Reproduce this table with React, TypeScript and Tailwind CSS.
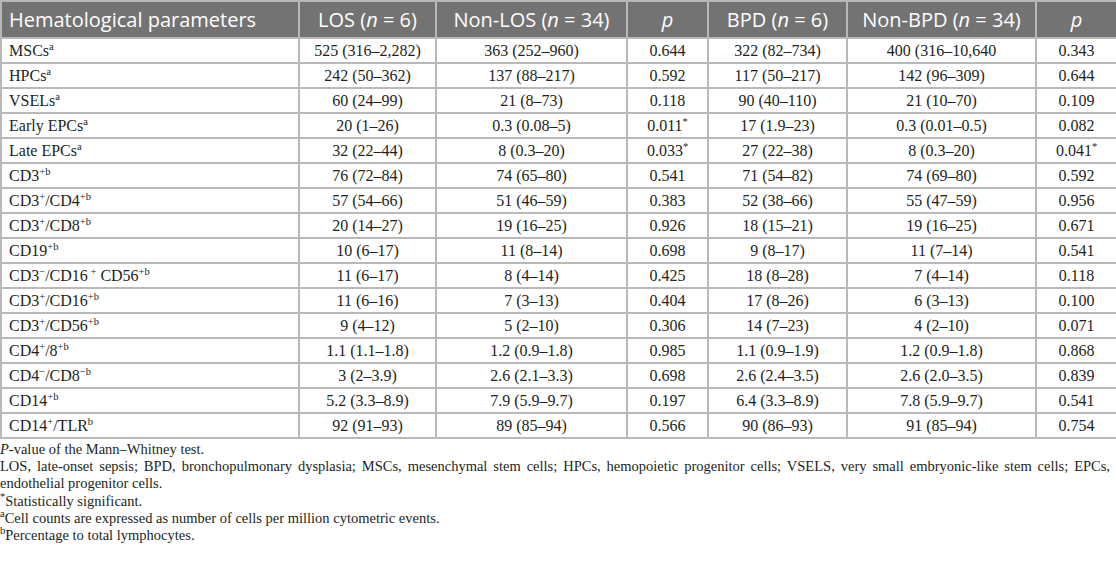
import type { ReactNode } from "react";

type Row = {
  label: ReactNode;
  los: string;
  nonLos: string;
  p1: ReactNode;
  bpd: string;
  nonBpd: string;
  p2: ReactNode;
};

const Sup = ({ children }: { children: ReactNode }) => (
  <sup className="text-[10.5px] leading-none relative -top-[6px] align-baseline">{children}</sup>
);

const Sig = ({ v }: { v: string }) => (
  <>
    {v}
    <Sup>*</Sup>
  </>
);

const rows: Row[] = [
  { label: <>MSCs<Sup>a</Sup></>, los: "525 (316–2,282)", nonLos: "363 (252–960)", p1: "0.644", bpd: "322 (82–734)", nonBpd: "400 (316–10,640", p2: "0.343" },
  { label: <>HPCs<Sup>a</Sup></>, los: "242 (50–362)", nonLos: "137 (88–217)", p1: "0.592", bpd: "117 (50–217)", nonBpd: "142 (96–309)", p2: "0.644" },
  { label: <>VSELs<Sup>a</Sup></>, los: "60 (24–99)", nonLos: "21 (8–73)", p1: "0.118", bpd: "90 (40–110)", nonBpd: "21 (10–70)", p2: "0.109" },
  { label: <>Early EPCs<Sup>a</Sup></>, los: "20 (1–26)", nonLos: "0.3 (0.08–5)", p1: <Sig v="0.011" />, bpd: "17 (1.9–23)", nonBpd: "0.3 (0.01–0.5)", p2: "0.082" },
  { label: <>Late EPCs<Sup>a</Sup></>, los: "32 (22–44)", nonLos: "8 (0.3–20)", p1: <Sig v="0.033" />, bpd: "27 (22–38)", nonBpd: "8 (0.3–20)", p2: <Sig v="0.041" /> },
  { label: <>CD3<Sup>+b</Sup></>, los: "76 (72–84)", nonLos: "74 (65–80)", p1: "0.541", bpd: "71 (54–82)", nonBpd: "74 (69–80)", p2: "0.592" },
  { label: <>CD3<Sup>+</Sup>/CD4<Sup>+b</Sup></>, los: "57 (54–66)", nonLos: "51 (46–59)", p1: "0.383", bpd: "52 (38–66)", nonBpd: "55 (47–59)", p2: "0.956" },
  { label: <>CD3<Sup>+</Sup>/CD8<Sup>+b</Sup></>, los: "20 (14–27)", nonLos: "19 (16–25)", p1: "0.926", bpd: "18 (15–21)", nonBpd: "19 (16–25)", p2: "0.671" },
  { label: <>CD19<Sup>+b</Sup></>, los: "10 (6–17)", nonLos: "11 (8–14)", p1: "0.698", bpd: "9 (8–17)", nonBpd: "11 (7–14)", p2: "0.541" },
  { label: <>CD3<Sup>−</Sup>/CD16<Sup> +</Sup> CD56<Sup>+b</Sup></>, los: "11 (6–17)", nonLos: "8 (4–14)", p1: "0.425", bpd: "18 (8–28)", nonBpd: "7 (4–14)", p2: "0.118" },
  { label: <>CD3<Sup>+</Sup>/CD16<Sup>+b</Sup></>, los: "11 (6–16)", nonLos: "7 (3–13)", p1: "0.404", bpd: "17 (8–26)", nonBpd: "6 (3–13)", p2: "0.100" },
  { label: <>CD3<Sup>+</Sup>/CD56<Sup>+b</Sup></>, los: "9 (4–12)", nonLos: "5 (2–10)", p1: "0.306", bpd: "14 (7–23)", nonBpd: "4 (2–10)", p2: "0.071" },
  { label: <>CD4<Sup>+</Sup>/8<Sup>+b</Sup></>, los: "1.1 (1.1–1.8)", nonLos: "1.2 (0.9–1.8)", p1: "0.985", bpd: "1.1 (0.9–1.9)", nonBpd: "1.2 (0.9–1.8)", p2: "0.868" },
  { label: <>CD4<Sup>−</Sup>/CD8<Sup>−b</Sup></>, los: "3 (2–3.9)", nonLos: "2.6 (2.1–3.3)", p1: "0.698", bpd: "2.6 (2.4–3.5)", nonBpd: "2.6 (2.0–3.5)", p2: "0.839" },
  { label: <>CD14<Sup>+b</Sup></>, los: "5.2 (3.3–8.9)", nonLos: "7.9 (5.9–9.7)", p1: "0.197", bpd: "6.4 (3.3–8.9)", nonBpd: "7.8 (5.9–9.7)", p2: "0.541" },
  { label: <>CD14<Sup>+</Sup>/TLR<Sup>b</Sup></>, los: "92 (91–93)", nonLos: "89 (85–94)", p1: "0.566", bpd: "90 (86–93)", nonBpd: "91 (85–94)", p2: "0.754" },
];

const th = "border-2 border-[#b9b9b9] font-normal text-center h-[37px] p-0";
const td = "border-2 border-[#b9b9b9] text-center h-[25px] p-0 leading-none";

export default function App() {
  return (
    <div className="w-[1116px] h-[566px] bg-white font-['Liberation_Serif',serif] text-[#231f20] overflow-hidden">
      <table className="w-[1116px] table-fixed border-collapse">
        <colgroup>
          <col className="w-[298px]" />
          <col className="w-[137px]" />
          <col className="w-[191px]" />
          <col className="w-[81px]" />
          <col className="w-[139px]" />
          <col className="w-[189px]" />
          <col className="w-[81px]" />
        </colgroup>
        <thead>
          <tr className="bg-[#737373] text-white text-[20px] font-['Open_Sans',sans-serif]">
            <th className={`${th} text-left pl-[7px]`}>Hematological parameters</th>
            <th className={th}>
              LOS (<i>n</i> = 6)
            </th>
            <th className={th}>
              Non-LOS (<i>n</i> = 34)
            </th>
            <th className={th}>
              <i>p</i>
            </th>
            <th className={th}>
              BPD (<i>n</i> = 6)
            </th>
            <th className={th}>
              Non-BPD (<i>n</i> = 34)
            </th>
            <th className={th}>
              <i>p</i>
            </th>
          </tr>
        </thead>
        <tbody className="text-[16px]">
          {rows.map((r, i) => (
            <tr key={i}>
              <td className={`${td} text-left pl-[7px]`}>{r.label}</td>
              <td className={td}>{r.los}</td>
              <td className={td}>{r.nonLos}</td>
              <td className={td}>{r.p1}</td>
              <td className={td}>{r.bpd}</td>
              <td className={td}>{r.nonBpd}</td>
              <td className={td}>{r.p2}</td>
            </tr>
          ))}
        </tbody>
      </table>
      <div className="mt-[2px] text-[14.5px] leading-[17.2px] pr-[6px]">
        <p>
          <i>P</i>-value of the Mann–Whitney test.
        </p>
        <p className="text-justify">
          LOS, late-onset sepsis; BPD, bronchopulmonary dysplasia; MSCs, mesenchymal stem cells; HPCs, hemopoietic
          progenitor cells; VSELS, very small embryonic-like stem cells; EPCs, endothelial progenitor cells.
        </p>
        <p>
          <Sup>*</Sup>Statistically significant.
        </p>
        <p>
          <Sup>a</Sup>Cell counts are expressed as number of cells per million cytometric events.
        </p>
        <p>
          <Sup>b</Sup>Percentage to total lymphocytes.
        </p>
      </div>
    </div>
  );
}
